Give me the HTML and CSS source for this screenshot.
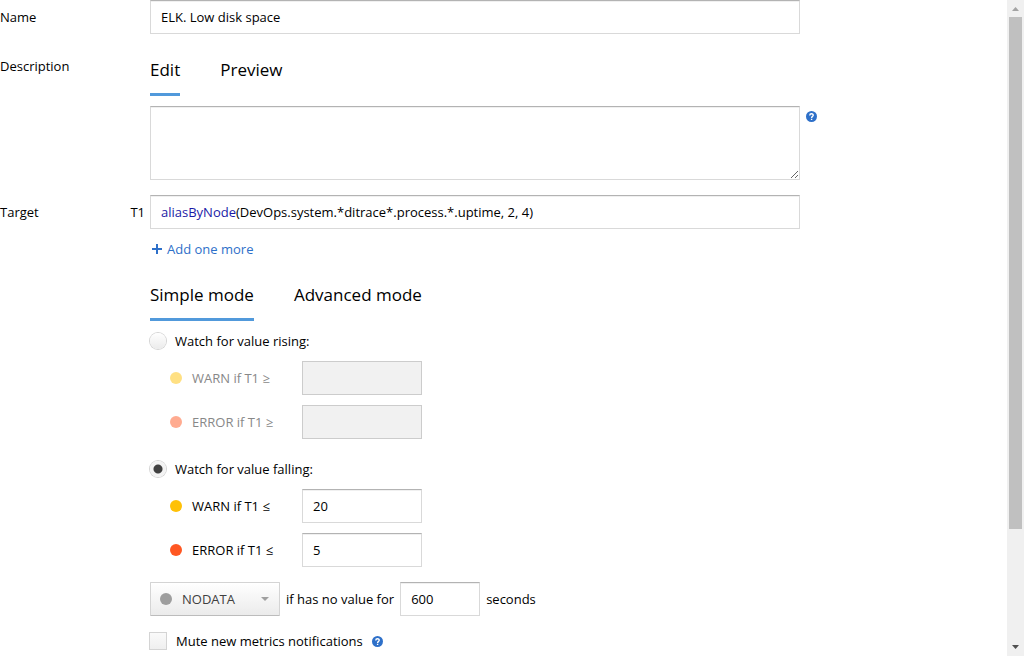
FILE: index.html
```html
<!DOCTYPE html>
<html lang="en">
<head>
<meta charset="utf-8">
<meta name="viewport" content="width=device-width, initial-scale=1">
<title>Edit trigger</title>
<link rel="stylesheet" href="styles.css">
</head>
<body>
<svg class="defs" aria-hidden="true">
  <symbol id="help" viewBox="0 0 12 12">
    <circle cx="6" cy="6" r="6" fill="#2e70c9"/>
    <path d="M4.1 4.8C4.1 2.4 7.9 2.4 7.9 4.7C7.9 5.9 6.1 5.900 6.1 7.500M6.100 8.400V9.800" fill="none" stroke="#fff" stroke-width="1.500"/>
  </symbol>
</svg>
<div class="page">
  <form class="form">
    <div class="row">
      <label class="caption" for="name">Name</label>
      <input class="input wide" id="name" type="text" value="ELK. Low disk space">
    </div>

    <div class="row description">
      <label class="caption description-caption" for="description">Description</label>
      <div class="body">
        <div class="tabs" role="tablist">
          <button class="tab active" type="button" role="tab" aria-selected="true">Edit</button>
          <button class="tab" type="button" role="tab" aria-selected="false">Preview</button>
        </div>
        <div class="with-help">
          <textarea class="input wide area" id="description"></textarea>
          <button class="help area-help" type="button" aria-label="Help"><svg><use href="#help"/></svg></button>
        </div>
      </div>
    </div>

    <div class="row target">
      <div class="caption"><span>Target</span><span id="t1">T1</span></div>
      <div class="input wide code" role="textbox" contenteditable="true" spellcheck="false" aria-labelledby="t1"><span class="fn">aliasByNode</span>(DevOps.system.*ditrace*.process.*.uptime, 2, 4)</div>
    </div>

    <div class="content">
      <button class="add" type="button">
        <svg class="plus" viewBox="0 0 10 10"><path d="M5 0V10M0 5H10" stroke="#2e70c9" stroke-width="2"/></svg>
        Add one more
      </button>

      <div class="tabs" role="tablist">
        <button class="tab active" type="button" role="tab" aria-selected="true">Simple mode</button>
        <button class="tab" type="button" role="tab" aria-selected="false">Advanced mode</button>
      </div>

      <div class="group">
        <label class="choice"><input class="radio" type="radio" name="watch">Watch for value rising:</label>
        <div class="threshold disabled">
          <span class="dot warn"></span>
          <label class="threshold-label" for="warn-up">WARN if T1 ≥</label>
          <input class="input number" id="warn-up" type="text" disabled>
        </div>
        <div class="threshold disabled">
          <span class="dot error"></span>
          <label class="threshold-label" for="error-up">ERROR if T1 ≥</label>
          <input class="input number" id="error-up" type="text" disabled>
        </div>
      </div>

      <div class="group falling">
        <label class="choice"><input class="radio" type="radio" name="watch" checked>Watch for value falling:</label>
        <div class="threshold">
          <span class="dot warn"></span>
          <label class="threshold-label" for="warn-down">WARN if T1 ≤</label>
          <input class="input number" id="warn-down" type="text" value="20">
        </div>
        <div class="threshold">
          <span class="dot error"></span>
          <label class="threshold-label" for="error-down">ERROR if T1 ≤</label>
          <input class="input number" id="error-down" type="text" value="5">
        </div>
      </div>

      <div class="nodata">
        <div class="select-box">
          <select class="select" aria-label="State">
            <option>NODATA</option>
          </select>
        </div>
        <label for="ttl">if has no value for</label>
        <input class="input ttl" id="ttl" type="text" value="600">
        <span>seconds</span>
      </div>

      <div class="mute">
        <label class="choice"><input class="checkbox" type="checkbox">Mute new metrics notifications</label>
        <button class="help" type="button" aria-label="Help"><svg><use href="#help"/></svg></button>
      </div>
    </div>
  </form>

  <div class="scrollbar" aria-hidden="true">
    <svg class="arrow" viewBox="0 0 17 17"><path d="M5 11H12L8.500 7Z" fill="#a3a3a3"/></svg>
    <div class="track"><div class="thumb"></div></div>
    <svg class="arrow" viewBox="0 0 17 17"><path d="M5 6H12L8.500 10Z" fill="#505050"/></svg>
  </div>
</div>
</body>
</html>
```
FILE: styles.css
```css
* {
  box-sizing: border-box;
}

body {
  margin: 0;
  background: #fff;
  color: #000;
  font: 13px/20px "Segoe UI", "Open Sans", "Noto Sans", sans-serif;
}

button,
input,
textarea,
select {
  margin: 0;
  font: inherit;
  color: inherit;
}

button {
  padding: 0;
  border: 0;
  background: none;
  cursor: pointer;
}

.defs {
  display: none;
}

.page {
  display: flex;
  height: 100vh;
}

.form {
  flex: 1;
  min-width: 0;
  overflow: hidden;
}

.row {
  display: flex;
}

.caption {
  display: flex;
  flex: none;
  justify-content: space-between;
  width: 150px;
  padding: 7px 5px 0 0;
}

.body {
  flex: 1;
  min-width: 0;
}

.input {
  height: 34px;
  padding: 6px 10px;
  border: 1px solid #d9d9d9;
  border-top-color: #b3b3b3;
  border-radius: 0;
  background: #fff;
  box-shadow: inset 0 1px 0 #f0f0f0;
  outline: 0;
}

.input:disabled {
  border-color: #ccc;
  background: #f1f1f1;
  box-shadow: none;
}

.wide {
  flex: 0 1 650px;
  min-width: 0;
}

.description {
  margin-top: 22px;
}

.description-caption {
  padding-top: 0;
}

.tabs {
  display: flex;
  gap: 40px;
}

.tab {
  padding: 2px 0 12px;
  border-bottom: 3px solid transparent;
  font-size: 17px;
  line-height: 23px;
}

.tab.active {
  border-color: #5199db;
}

.with-help {
  display: flex;
  gap: 6px;
  margin-top: 10px;
}

.area {
  height: 74px;
  resize: vertical;
}

.help {
  width: 11px;
  height: 11px;
}

.help svg {
  display: block;
  width: 100%;
  height: 100%;
}

.area-help {
  margin-top: 5px;
}

.target {
  margin-top: 15px;
}

.code {
  overflow: hidden;
  white-space: nowrap;
}

.fn {
  color: #1a1aa6;
}

.content {
  padding-left: 150px;
}

.add {
  display: flex;
  align-items: center;
  gap: 5px;
  margin: 10px 0 22px 2px;
  color: #2e70c9;
}

.plus {
  width: 10px;
  height: 10px;
}

.group {
  display: flex;
  flex-direction: column;
  gap: 10px;
  margin-top: 10px;
}

.falling {
  margin-top: 20px;
}

.choice {
  display: flex;
  align-items: center;
  align-self: flex-start;
  gap: 9px;
}

.radio,
.checkbox {
  appearance: none;
  flex: none;
  width: 16px;
  height: 16px;
  background: linear-gradient(#fff, #ebebeb);
  box-shadow: 0 0 0 1px #d4d4d4;
}

.radio {
  border-radius: 50%;
}

.radio:checked {
  background: radial-gradient(circle, #404040 0 4px, #f3f3f3 5px);
}

.checkbox {
  margin-right: 1px;
  background: linear-gradient(#fafafa, #efefef);
}

.threshold {
  display: flex;
  align-items: center;
  gap: 10px;
  padding-left: 20px;
}

.dot {
  width: 12px;
  height: 12px;
  border-radius: 50%;
}

.warn {
  background: #ffc107;
}

.error {
  background: #ff5722;
}

.threshold-label {
  width: 100px;
}

.disabled .dot {
  opacity: 0.5;
}

.disabled .threshold-label {
  color: #888;
}

.number {
  width: 120px;
}

.nodata {
  display: flex;
  align-items: center;
  gap: 6px;
  margin-top: 15px;
}

.select-box {
  position: relative;
}

.select-box::before {
  content: "";
  position: absolute;
  top: 11px;
  left: 10px;
  width: 12px;
  height: 12px;
  border-radius: 50%;
  background: #9e9e9e;
}

.select-box::after {
  content: "";
  position: absolute;
  top: 15px;
  right: 11px;
  border: 4px solid transparent;
  border-top-color: #a0a0a0;
  border-bottom: 0;
  pointer-events: none;
}

.select {
  appearance: none;
  display: block;
  width: 130px;
  height: 34px;
  padding: 0 30px 0 31px;
  border: 1px solid #d4d4d4;
  border-bottom-color: #bcbcbc;
  border-radius: 1px;
  background: linear-gradient(#fff, #ebebeb);
  color: #404040;
}

.ttl {
  width: 80px;
}

.mute {
  display: flex;
  align-items: center;
  gap: 9px;
  margin-top: 15px;
}

.scrollbar {
  display: flex;
  flex: none;
  flex-direction: column;
  width: 17px;
  background: #f0f0f0;
}

.arrow {
  width: 17px;
  height: 17px;
}

.track {
  flex: 1;
  padding: 0 2px;
}

.thumb {
  height: 82.3%;
  background: #c0c0c0;
}
```
